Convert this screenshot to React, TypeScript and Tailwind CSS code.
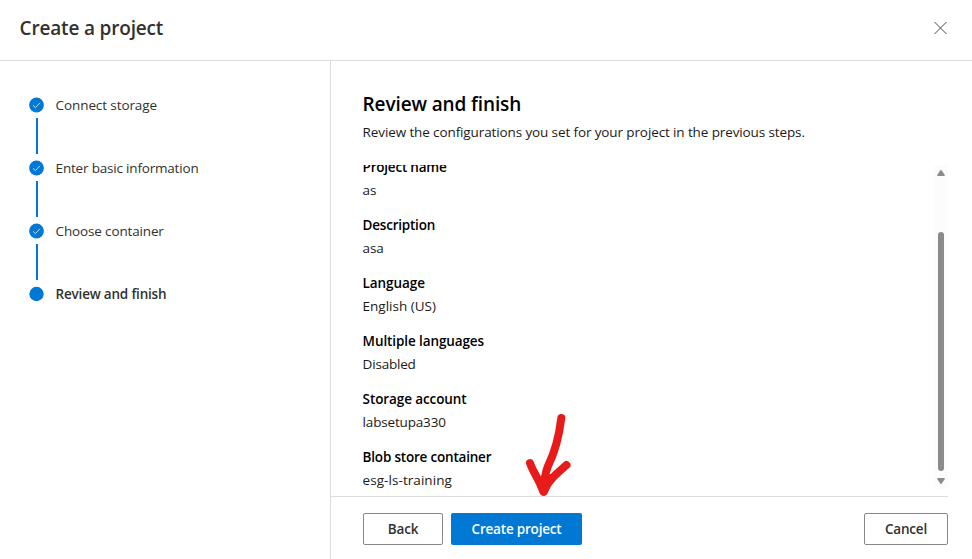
const steps = [
  { label: 'Connect storage', tracking: 'tracking-[-0.1px]' },
  { label: 'Enter basic information', tracking: 'tracking-[-0.19px]' },
  { label: 'Choose container', tracking: 'tracking-[-0.15px]' },
];

const details = [
  { label: 'Project name', value: 'as', lt: 'tracking-[-0.22px]', vt: 'tracking-normal' },
  { label: 'Description', value: 'asa', lt: 'tracking-[-0.22px]', vt: 'tracking-[-0.2px]' },
  { label: 'Language', value: 'English (US)', lt: 'tracking-[-0.08px]', vt: 'tracking-normal' },
  { label: 'Multiple languages', value: 'Disabled', lt: 'tracking-[-0.1px]', vt: 'tracking-[-0.2px]' },
  { label: 'Storage account', value: 'labsetupa330', lt: 'tracking-[-0.1px]', vt: 'tracking-[-0.17px]' },
  { label: 'Blob store container', value: 'esg-ls-training', lt: 'tracking-[-0.2px]', vt: 'tracking-[0.06px]' },
];

function Header() {
  return (
    <header className="flex h-[61px] shrink-0 items-start justify-between border-b border-[#dcdcdc] pl-[19.6px] pr-[25px]">
      <h1 className="mt-[14px] text-[19px] leading-[28px] font-semibold tracking-[-0.18px] text-[#323130]">Create a project</h1>
      <button aria-label="Close" className="mt-[22px]">
        <svg width="13" height="12" viewBox="0 0 13 12" fill="none" stroke="#4a4948" strokeWidth="1">
          <path d="M0.5 0 12.500 12M12.500 0 0.5 12" />
        </svg>
      </button>
    </header>
  );
}

function Steps() {
  return (
    <nav className="w-[331px] shrink-0 border-r border-[#dcdcdc] pl-[29px] pt-[34px] text-[#323130]">
      {steps.map((s) => (
        <div key={s.label} className="flex h-[63px] gap-[11.6px]">
          <div className="flex w-[15px] flex-col items-center pt-[2px]">
            <svg width="15" height="16" viewBox="0 0 15 16" className="shrink-0">
              <circle cx="7.5" cy="8" r="7.4" fill="#0078d4" />
              <path d="M4 8.300 6.400 10.600 11 5.800" fill="none" stroke="#d6eafa" strokeWidth="0.9" />
            </svg>
            <div className="ml-px mt-[5px] h-[36px] w-[2px] bg-[#0078d4]" />
          </div>
          <span className={`text-[13.5px] leading-[20px] ${s.tracking}`}>{s.label}</span>
        </div>
      ))}
      <div className="flex gap-[11.6px]">
        <svg width="15" height="16" viewBox="0 0 15 16" className="mt-[2px] shrink-0">
          <circle cx="7.5" cy="8" r="7.2" fill="#0078d4" />
        </svg>
        <span className="text-[13.5px] leading-[20px] font-semibold tracking-[-0.2px]">Review and finish</span>
      </div>
    </nav>
  );
}

function Scrollbar() {
  return (
    <div className="flex w-[14px] shrink-0 flex-col items-center bg-[#fcfcfc] pt-[5px]">
      <svg width="8" height="6" viewBox="0 0 8 6" fill="#8b8b8b">
        <path d="M3.2 0.5Q4-.4 4.8.5L7.8 5Q8 6 7.2 6H.8Q0 6 .2 5Z" />
      </svg>
      <div className="mt-[56px] h-[239px] w-[6px] rounded-full bg-[#8b8b8b]" />
      <svg width="8" height="6" viewBox="0 0 8 6" fill="#8b8b8b" className="mt-[7px]">
        <path d="M3.2 5.5Q4 6.4 4.8 5.5L7.8 1Q8 0 7.2 0H.8Q0 0 .2 1Z" />
      </svg>
    </div>
  );
}

export default function App() {
  return (
    <div className="relative flex h-[559px] w-[972px] flex-col overflow-hidden bg-white font-['Open_Sans','Noto_Sans',sans-serif]">
      <Header />
      <div className="flex min-h-0 flex-1">
        <Steps />
        <main className="flex w-[617px] flex-col text-[13.5px] leading-[20px] text-[#1b1a19]">
          <div className="h-[104px] shrink-0 pl-[31.6px] pt-[29px]">
            <h2 className="text-[19px] leading-[28px] font-semibold tracking-[-0.12px] text-black">Review and finish</h2>
            <p className="mt-[4px] whitespace-nowrap tracking-[-0.115px]">Review the configurations you set for your project in the previous steps.</p>
          </div>
          <div className="flex h-[324px] shrink-0 justify-between overflow-hidden pl-[31.6px]">
            <dl className="-mt-[8px]">
              {details.map((d) => (
                <div key={d.label} className="h-[58px]">
                  <dt className={`font-semibold text-black ${d.lt}`}>{d.label}</dt>
                  <dd className={`mt-[3px] ${d.vt}`}>{d.value}</dd>
                </div>
              ))}
            </dl>
            <Scrollbar />
          </div>
          <footer className="mt-[7px] flex border-t border-[#dcdcdc] pl-[32px] pt-[16px] text-[13.5px] font-semibold tracking-[-0.2px]">
            <button className="h-[32px] w-[80px] rounded-[2px] border border-[#8a8886] text-[#323130]">Back</button>
            <button className="ml-[8px] h-[32px] w-[131px] rounded-[2px] bg-[#0078d4] text-white">Create project</button>
            <button className="ml-auto h-[32px] w-[84px] rounded-[2px] border border-[#8a8886] text-[#323130]">Cancel</button>
          </footer>
        </main>
      </div>
      <svg className="absolute left-[510px] top-[400px]" width="80" height="110" viewBox="0 0 80 110" fill="none" stroke="#e81b1b" strokeWidth="8" strokeLinecap="round" strokeLinejoin="round">
        <path d="M51.3 18C49 37 45 52 38 66Q34 76 33.5 91.5" />
        <path d="M20 63C23 72 28 78 31 86L33.5 91.5C37 82 45 75 56.5 65" />
        <path d="M31 82 34 91.5 40 78Z" fill="#e81b1b" />
      </svg>
    </div>
  );
}
